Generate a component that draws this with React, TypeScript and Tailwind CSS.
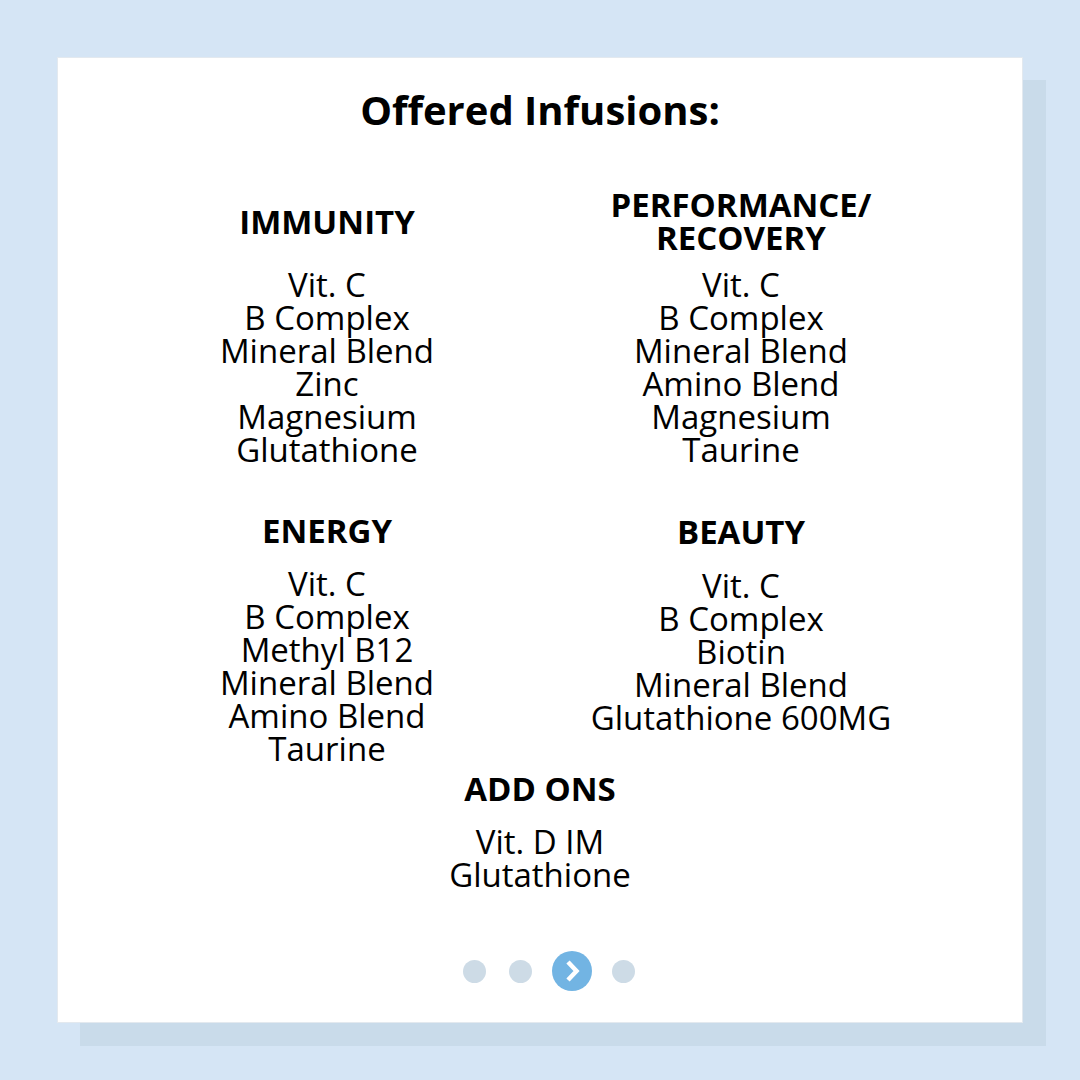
import React from "react";

type Group = { title: string[]; items: string[] };

const top: Group[] = [
    { title: ["IMMUNITY"], items: ["Vit. C", "B Complex", "Mineral Blend", "Zinc", "Magnesium", "Glutathione"] },
    { title: ["PERFORMANCE/", "RECOVERY"], items: ["Vit. C", "B Complex", "Mineral Blend", "Amino Blend", "Magnesium", "Taurine"] },
];

const bottom: Group[] = [
    { title: ["ENERGY"], items: ["Vit. C", "B Complex", "Methyl B12", "Mineral Blend", "Amino Blend", "Taurine"] },
    { title: ["BEAUTY"], items: ["Vit. C", "B Complex", "Biotin", "Mineral Blend", "Glutathione 600MG"] },
];

const Items = ({ items }: { items: string[] }) => (
    <div className="text-[33px] leading-[33px] text-black">
        {items.map((it, i) => (
            <div key={i}>{it}</div>
        ))}
    </div>
);

const App = () => {
    return (
        <div
            className="w-[1080px] h-[1080px] bg-[#d5e5f5] pt-[57px] pl-[57px]"
            style={{ fontFamily: '"Open Sans", "Liberation Sans", sans-serif' }}
        >
            <div className="w-[966px] h-[966px] bg-white shadow-[23px_23px_0_#c9dbea] border border-[#e3e9ef] flex flex-col items-center pt-[27px] text-center">
                <h1 className="text-[40px] leading-[49px] font-bold text-black">Offered Infusions:</h1>

                <div className="mt-[54px] grid grid-cols-[414px_414px] w-full pl-[62px]">
                    {top.map((g, i) => (
                        <div key={i} className="flex flex-col items-center">
                            <div className="h-[66px] flex flex-col justify-center text-[33px] leading-[33px] font-bold">
                                {g.title.map((t) => (
                                    <div key={t}>{t}</div>
                                ))}
                            </div>
                            <div className="mt-[14px]">
                                <Items items={g.items} />
                            </div>
                        </div>
                    ))}
                    <div className="flex flex-col items-center mt-[48px]">
                        <div className="h-[33px] text-[33px] leading-[33px] font-bold">{bottom[0].title[0]}</div>
                        <div className="mt-[20px]">
                            <Items items={bottom[0].items} />
                        </div>
                    </div>
                    <div className="flex flex-col items-center mt-[49px]">
                        <div className="h-[33px] text-[33px] leading-[33px] font-bold">{bottom[1].title[0]}</div>
                        <div className="mt-[21px]">
                            <Items items={bottom[1].items} />
                        </div>
                    </div>
                </div>

                <div className="mt-[7px] flex flex-col items-center">
                    <div className="h-[33px] text-[33px] leading-[33px] font-bold">ADD ONS</div>
                    <div className="mt-[20px]">
                        <Items items={["Vit. D IM", "Glutathione"]} />
                    </div>
                </div>

                <div className="mt-[60px] ml-[17px] flex items-center h-[40px]">
                    <div className="w-[23px] h-[23px] rounded-full bg-[#cddbe6]" />
                    <div className="w-[23px] h-[23px] rounded-full bg-[#cddbe6] ml-[23px]" />
                    <div className="w-[40px] h-[40px] rounded-full bg-[#72b4e3] ml-[20px] flex items-center justify-center">
                        <svg width="16" height="22" viewBox="0 0 16 22" fill="none">
                            <polyline points="4,2 12.5,11 4,20" stroke="white" strokeWidth="4.5" strokeLinejoin="miter" />
                        </svg>
                    </div>
                    <div className="w-[23px] h-[23px] rounded-full bg-[#cddbe6] ml-[20px]" />
                </div>
            </div>
        </div>
    );
};

export default App;
